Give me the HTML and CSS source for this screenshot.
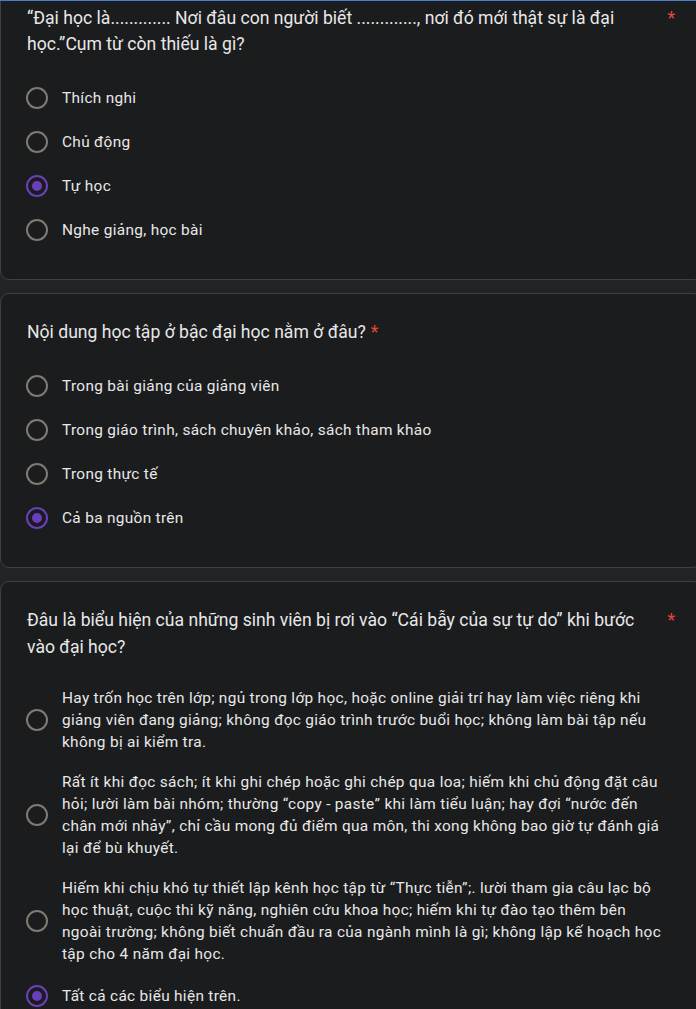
FILE: index.html
```html
<!DOCTYPE html>
<html lang="vi">
<head>
<meta charset="utf-8">
<title>Câu hỏi</title>
<link rel="stylesheet" href="styles.css">
</head>
<body>
<div class="topline"></div>
<main class="list">
  <section class="card card-cut">
    <div class="q">
      <span class="qtext">“Đại học là............. Nơi đâu con người biết ............., nơi đó mới thật sự là đại học.”Cụm từ còn thiếu là gì?</span>
      <span class="req">*</span>
    </div>
    <ul class="opts">
      <li class="opt"><span class="radio"></span><span class="label">Thích nghi</span></li>
      <li class="opt"><span class="radio"></span><span class="label">Chủ động</span></li>
      <li class="opt"><span class="radio on"></span><span class="label">Tự học</span></li>
      <li class="opt"><span class="radio"></span><span class="label">Nghe giảng, học bài</span></li>
    </ul>
  </section>

  <section class="card">
    <div class="q">
      <span class="qtext">Nội dung học tập ở bậc đại học nằm ở đâu?</span>
      <span class="req">*</span>
    </div>
    <ul class="opts">
      <li class="opt"><span class="radio"></span><span class="label">Trong bài giảng của giảng viên</span></li>
      <li class="opt"><span class="radio"></span><span class="label">Trong giáo trình, sách chuyên khảo, sách tham khảo</span></li>
      <li class="opt"><span class="radio"></span><span class="label">Trong thực tế</span></li>
      <li class="opt"><span class="radio on"></span><span class="label">Cả ba nguồn trên</span></li>
    </ul>
  </section>

  <section class="card">
    <div class="q">
      <span class="qtext">Đâu là biểu hiện của những sinh viên bị rơi vào “Cái bẫy của sự tự do” khi bước vào đại học?</span>
      <span class="req">*</span>
    </div>
    <ul class="opts">
      <li class="opt"><span class="radio"></span><span class="label">Hay trốn học trên lớp; ngủ trong lớp học, hoặc online giải trí hay làm việc riêng khi giảng viên đang giảng; không đọc giáo trình trước buổi học; không làm bài tập nếu không bị ai kiểm tra.</span></li>
      <li class="opt"><span class="radio"></span><span class="label">Rất ít khi đọc sách; ít khi ghi chép hoặc ghi chép qua loa; hiếm khi chủ động đặt câu hỏi; lười làm bài nhóm; thường “copy - paste” khi làm tiểu luận; hay đợi “nước đến chân mới nhảy”, chỉ cầu mong đủ điểm qua môn, thi xong không bao giờ tự đánh giá lại để bù khuyết.</span></li>
      <li class="opt"><span class="radio"></span><span class="label">Hiếm khi chịu khó tự thiết lập kênh học tập từ “Thực tiễn”;. lười tham gia câu lạc bộ học thuật, cuộc thi kỹ năng, nghiên cứu khoa học; hiếm khi tự đào tạo thêm bên ngoài trường; không biết chuẩn đầu ra của ngành mình là gì; không lập kế hoạch học tập cho 4 năm đại học.</span></li>
      <li class="opt"><span class="radio on"></span><span class="label">Tất cả các biểu hiện trên.</span></li>
    </ul>
  </section>
</main>
</body>
</html>
```

FILE: styles.css
```css
html, body {
  margin: 0;
  padding: 0;
}

body {
  background: #222325;
  color: #e3e3e3;
  font-family: Roboto, "Noto Sans", "Liberation Sans", sans-serif;
  overflow: hidden;
  height: 1009px;
}

.topline {
  height: 1px;
  background: #4a7ccc;
}

.list {
  display: flex;
  flex-direction: column;
  gap: 13.5px;
  margin-right: -6px;
}

.card {
  background: #1b1c1e;
  border: 1px solid #3f4043;
  border-radius: 9px;
  padding: 25px 26px 27px 25px;
}

.card-cut {
  border-top: none;
  border-radius: 0 0 9px 9px;
  padding-top: 4px;
}

.q {
  display: flex;
  align-items: flex-start;
  font-size: 17.6px;
  line-height: 26.4px;
  letter-spacing: 0;
  color: #e8e8e8;
  padding-left: 1px;
}

.qtext {
  flex: 0 1 auto;
}

.req {
  flex: 0 0 auto;
  color: #e8453c;
  margin-left: 5px;
}

.opts {
  list-style: none;
  margin: 18px 0 0 0;
  padding: 0 9px 0 0;
}

.opt {
  display: flex;
  align-items: center;
  gap: 14px;
  min-height: 26px;
  padding: 9px 0;
}

.radio {
  flex: 0 0 auto;
  box-sizing: border-box;
  width: 22px;
  height: 22px;
  border: 2px solid #7f7a73;
  border-radius: 50%;
  display: flex;
  align-items: center;
  justify-content: center;
}

.radio.on {
  border-color: #6a3fbb;
}

.radio.on::after {
  content: "";
  width: 10px;
  height: 10px;
  border-radius: 50%;
  background: #6a3fbb;
}

.label {
  font-size: 15.4px;
  line-height: 22px;
  letter-spacing: 0.32px;
  color: #e8e8e8;
}
```
